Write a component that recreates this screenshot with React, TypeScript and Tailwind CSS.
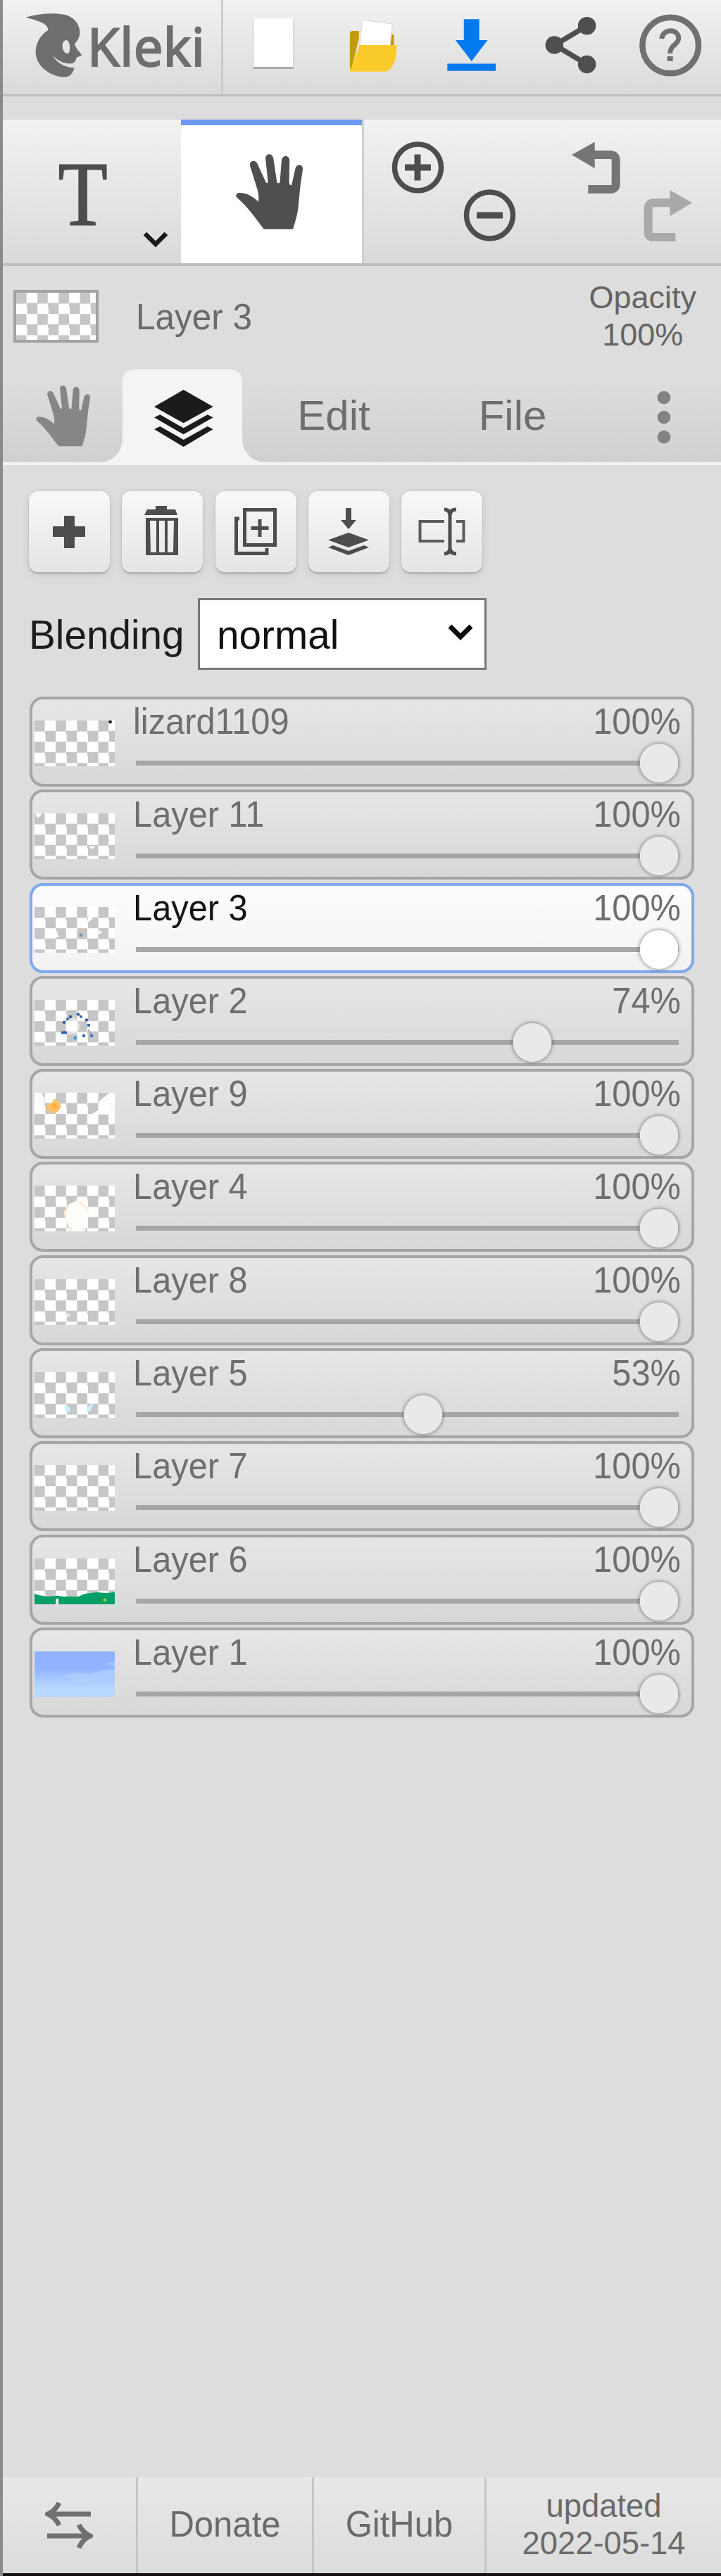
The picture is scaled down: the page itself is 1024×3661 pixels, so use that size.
import type { ReactNode } from 'react';
import clsx from 'clsx';

interface Layer {
  name: string;
  opacity: number;
  knob: number; // centre of the slider knob, in % of the track
  art?: ReactNode;
}

const layers: Layer[] = [
  {
    name: 'lizard1109',
    opacity: 100,
    knob: 96.4,
    art: <circle cx="107.5" cy="2" r="2.4" fill="#222" />,
  },
  {
    name: 'Layer 11',
    opacity: 100,
    knob: 96.4,
    art: (
      <g fill="#fff">
        <path d="M1 0h9l-2 4-4 2z" />
        <path d="M77 47h9l-4 4z" />
      </g>
    ),
  },
  {
    name: 'Layer 3',
    opacity: 100,
    knob: 96.4,
    art: (
      <>
        <path d="M76 15h8l-8 7zM30 31l5 12h-5zM91 33l6 3-6 3z" fill="#fff" />
        <circle cx="66" cy="40" r="2.4" fill="#7b97ac" />
      </>
    ),
  },
  {
    name: 'Layer 2',
    opacity: 74,
    knob: 73,
    art: (
      <>
        <path d="M45 31l12-7 8 12-4 12-13 2-4-6z" fill="#fff" opacity=".5" />
        <path d="M42 32l5-5 4-3M62 20l4 4M76 42l6 9" fill="none" stroke="#7f9cc8" strokeWidth="1.4" />
        <g fill="#2f62ad">
          <circle cx="42" cy="32" r="2.2" />
          <circle cx="47" cy="27" r="1.8" />
          <circle cx="51" cy="24" r="2.2" />
          <circle cx="62" cy="20.5" r="2.2" />
          <circle cx="66" cy="24" r="2" />
          <circle cx="74" cy="28.5" r="2.2" />
          <circle cx="77" cy="36" r="2.2" />
          <circle cx="70" cy="51" r="2.2" />
          <circle cx="81" cy="51" r="2" />
          <rect x="38" y="44.5" width="8" height="4" rx="1" />
        </g>
        <circle cx="58" cy="54" r="2.6" fill="#3f9fd4" />
      </>
    ),
  },
  {
    name: 'Layer 9',
    opacity: 100,
    knob: 96.4,
    art: (
      <>
        <path d="M0 0h10l4 8v8H0zM92 12l12-10 10-2v31H80l10-6z" fill="#fff" opacity=".93" />
        <path d="M16 18l8-3 4-7 7 6 3 6-5 7-7 3-6-5-4-1z" fill="#ffc066" />
        <circle cx="28" cy="19" r="4" fill="#ffb03d" />
      </>
    ),
  },
  {
    name: 'Layer 4',
    opacity: 100,
    knob: 96.4,
    art: (
      <>
        <path d="M60 21l-12 6-6 12 4 12 4 14h22l4-15V34l-6-9z" fill="#fffdfa" />
        <path d="M48 29l-5 9 1 6M64 22l13 15M50 65l3-5M70 60l2 4" stroke="#ffe9d2" strokeWidth="2.5" fill="none" />
      </>
    ),
  },
  {
    name: 'Layer 8',
    opacity: 100,
    knob: 96.4,
    art: <path d="M46 47l6 4-6 4z" fill="#e4e4e4" />,
  },
  {
    name: 'Layer 5',
    opacity: 53,
    knob: 52.9,
    art: (
      <g fill="#c5f1f8">
        <path d="M42 48l5-1 4 5-2 6-5-3z" />
        <path d="M75 50l6-5 3 1-4 9-6 3z" />
      </g>
    ),
  },
  { name: 'Layer 7', opacity: 100, knob: 96.4 },
  {
    name: 'Layer 6',
    opacity: 100,
    knob: 96.4,
    art: (
      <>
        <path d="M0 50l6 2 12 2 16-1 6 1h22l10-4 16-2 14 1 12-1v17H0z" fill="#079f68" />
        <path d="M30 65l1-8h3v8z" fill="#fff" />
        <circle cx="100" cy="59" r="2.4" fill="#8fcc3b" />
      </>
    ),
  },
  {
    name: 'Layer 1',
    opacity: 100,
    knob: 96.4,
    art: (
      <>
        <defs>
          <linearGradient id="sky" x1="0" y1="0" x2="0" y2="1">
            <stop offset=".35" stopColor="#90b2ff" />
            <stop offset=".6" stopColor="#a6c8ff" />
            <stop offset=".8" stopColor="#b7d8ff" />
          </linearGradient>
        </defs>
        <rect width="114" height="65" fill="url(#sky)" />
        <path d="M38 34l24-4 16 3 18-6 18-2v14l-30 3-34 3 2-6z" fill="#b0d1ff" opacity=".7" />
        <path d="M100 18l14-4v7z" fill="#b0d1ff" opacity=".6" />
      </>
    ),
  },
];

const activeLayer = 'Layer 3';

function HandIcon({ className }: { className: string }) {
  return (
    <svg viewBox="1003 655 290 325" className={className} fill="currentColor">
      <path d="M1125 977H1248C1262 935 1271 900 1273 860L1280 790 1290 722C1291 698 1263 698 1258 720L1243 788C1240 792 1234 790 1232 778L1234 685C1233 659 1202 659 1200 685L1193 775C1191 784 1182 784 1180 775L1165 675C1161 651 1130 653 1132 678L1142 772C1142 783 1136 783 1132 774L1096 696C1086 680 1062 686 1066 708L1098 810C1103 830 1104 845 1101 860C1080 838 1050 822 1022 822C1008 822 1002 834 1012 844C1060 885 1088 930 1125 977Z" />
    </svg>
  );
}

function KlekiLogo() {
  return (
    <svg viewBox="105 50 250 285" className="h-[95px] w-[83px] shrink-0" fill="#6e6e6e">
      <path
        fillRule="evenodd"
        d="M110 72C170 56 230 52 275 61C322 73 343 108 341 142C338 165 328 174 319 186C325 210 342 220 349 234C341 243 326 240 325 250C324 264 312 271 298 271C264 268 240 252 226 236C238 264 275 287 318 289C311 312 300 330 270 328C205 322 150 275 152 215C156 172 178 146 205 128C208 98 160 88 110 72ZM284 170C270 170 262 190 270 212C276 228 290 232 296 222C301 200 297 172 284 170Z"
      />
    </svg>
  );
}

function Header() {
  return (
    <header className="flex h-[137px] shrink-0 border-b-[3px] border-[#bfbfbf] bg-linear-to-b from-[#f2f2f2] to-[#dadada]">
      <div className="flex w-[313px] shrink-0 items-center gap-[6px] border-r-[3px] border-[#cbcbcb] pb-[6px] pl-[31px]">
        <KlekiLogo />
        <span className="pt-1 font-['Noto_Sans',sans-serif] text-[74px] leading-none tracking-[0.4px] text-[#6e6e6e] [-webkit-text-stroke:2px_#6e6e6e]">
          Kleki
        </span>
      </div>
      <div className="grid flex-1 grid-cols-5">
        <svg viewBox="315 0 142 134" className="h-[134px] w-full">
          <rect x="358" y="29" width="57" height="69" fill="#a8a8a8" />
          <rect x="357" y="27" width="59" height="68" fill="#d4d4d4" />
          <rect x="358.500" y="26" width="56" height="69" fill="#fff" />
        </svg>
        <svg viewBox="457 0 142 134" className="h-[134px] w-full">
          <path d="M496 46q1-2 4-2h9v10l-11 46-2-2zM554 49h5v15h-5z" fill="#c39b08" />
          <path d="M514 28l43 6-4 34h-43z" fill="#fff" stroke="#d8d8d8" strokeWidth="1" />
          <path d="M510 64H561Q563 64 563 67C562 85 558 102 544 102H496Z" fill="#fbca2b" />
        </svg>
        <svg viewBox="599 0 142 134" className="h-[134px] w-full" fill="#037bee">
          <path d="M658 27h22v30h12l-23 30-23-30h12zM634.500 90.500h69v10.500h-69z" />
        </svg>
        <svg viewBox="741 0 142 134" className="h-[134px] w-full" fill="#4f4f4f">
          <path d="M834 36.500L788 64l46 27.500" fill="none" stroke="#4f4f4f" strokeWidth="7.500" />
          <circle cx="834" cy="36.500" r="12.800" />
          <circle cx="787.500" cy="64" r="12.800" />
          <circle cx="834" cy="91.500" r="12.800" />
        </svg>
        <svg viewBox="883 0 142 134" className="h-[134px] w-full">
          <circle cx="952.500" cy="64.500" r="40" fill="none" stroke="#707070" strokeWidth="8.500" />
          <path
            d="M940 55C941 40 965 40 964 55C963 64 952 64 952 76"
            fill="none"
            stroke="#707070"
            strokeWidth="7"
          />
          <rect x="948" y="80" width="8" height="7" fill="#707070" />
        </svg>
      </div>
    </header>
  );
}

function ToolRow() {
  return (
    <div className="mt-[33px] flex h-[208px] shrink-0 border-b-4 border-[#c0c0c0] bg-linear-to-b from-[#f2f2f2] to-[#dadada]">
      <div className="relative flex w-[253px] shrink-0 justify-center pt-[40px] pr-[25px]">
        <span className="scale-x-[0.88] font-['Liberation_Serif',serif] text-[130px] leading-none text-[#4d4d4d] [-webkit-text-stroke:2px_#4d4d4d]">
          T
        </span>
        <svg viewBox="0 0 36 24" className="absolute right-[18px] bottom-[21px] h-6 w-9">
          <path d="M3 3l15 15L33 3" fill="none" stroke="#1a1a1a" strokeWidth="6.500" />
        </svg>
      </div>
      <div className="flex w-[257px] shrink-0 justify-center border-t-8 border-[#6c98f5] bg-white pt-10 pr-[6px]">
        <HandIcon className="h-[109px] w-[97px] text-[#4f4f4f]" />
      </div>
      <svg viewBox="514 170 255 204" className="h-[204px] w-[255px] shrink-0" fill="none" stroke="#4d4d4d">
        <path d="M515.500 170v204" stroke="#cfcfcf" strokeWidth="3" />
        <circle cx="593.500" cy="238" r="33" strokeWidth="7.500" />
        <circle cx="695.500" cy="306" r="33" strokeWidth="7.500" />
        <path d="M575 238h37M593 219.500v37M677 306h37" strokeWidth="9" />
      </svg>
      <svg viewBox="771 510 765 612" className="h-[204px] w-[255px] shrink-0" fill="none" strokeWidth="36">
        <path d="M990 660H1064Q1088 660 1088 684V785Q1088 807 1064 807H970" stroke="#757575" />
        <path d="M900 660L998 605V718Z" fill="#757575" />
        <path d="M1325 865H1250Q1226 865 1226 889V990Q1226 1011 1250 1011H1342" stroke="#a9a9a9" />
        <path d="M1413 865L1318 810V922Z" fill="#a9a9a9" />
      </svg>
    </div>
  );
}

function LayerStatus() {
  return (
    <div className="flex h-[147px] shrink-0 items-start pl-[15px]">
      <div className="mt-[34px] h-[75px] w-[121px] border-4 border-[#a2a2a2] bg-[repeating-conic-gradient(#fff_0_25%,#c6c6c6_0_50%)] bg-[length:30.2px_30.2px]" />
      <span className="mt-[46px] ml-[53px] origin-[50%_85%] scale-y-[1.06] text-[49.5px] leading-[54px] text-[#6a6a6a]">
        Layer 3
      </span>
      <div className="mt-[18px] mr-[35px] ml-auto text-center text-[45px] leading-[53px] text-[#646464]">
        Opacity
        <br />
        100%
      </div>
    </div>
  );
}

function Tabs() {
  return (
    <nav className="flex h-[136px] shrink-0 items-center border-b-4 border-[#f4f4f4] bg-linear-to-b from-[#ddd] from-15% to-[#d0d0d0] text-[60px] text-[#6e6e6e]">
      <div className="flex w-[170px] shrink-0 justify-center">
        <HandIcon className="h-[88px] w-[79px] text-[#868686]" />
      </div>
      <svg viewBox="522 435 510 408" className="h-[136px] w-[170px] shrink-0 translate-y-[2px] overflow-visible">
        <path
          d="M420 831C480 831 522 790 522 725V490Q522 435 577 435H977Q1032 435 1032 490V725C1032 790 1075 831 1135 831V843H420Z"
          fill="#f4f4f4"
        />
        <path
          d="M782 522L908 594 782 664 657 594ZM657 640L682 628 782 685 884 628 908 640 782 712ZM657 690L682 678 782 735 884 678 908 690 782 765Z"
          fill="#1b1b1b"
        />
      </svg>
      <span className="w-[260px] text-center leading-[132px]">Edit</span>
      <span className="w-[248px] text-center leading-[132px]">File</span>
      <svg viewBox="0 0 20 76" className="mx-auto h-[76px] w-5 translate-x-[5px] translate-y-[2px]" fill="#828282">
        <circle cx="10" cy="10" r="9.300" />
        <circle cx="10" cy="38" r="9.300" />
        <circle cx="10" cy="66" r="9.300" />
      </svg>
    </nav>
  );
}

function IconButton({ children }: { children: ReactNode }) {
  return (
    <button className="size-[115px] rounded-[13px] bg-linear-to-b from-[#f8f8f8] to-[#e5e5e5] shadow-[0_3px_2px_#b4b4b4,0_4px_14px_rgba(0,0,0,0.08),0_0_2px_rgba(0,0,0,0.2)]">
      <svg viewBox="0 0 115 115" className="size-[115px]" fill="#4d4d4d">
        {children}
      </svg>
    </button>
  );
}

function LayerActions() {
  return (
    <div className="flex gap-[17.3px] px-[41px] pt-[37px]">
      <IconButton>
        <path d="M50 35h15v15h15v15H65v16H50V65H34V50h16z" />
      </IconButton>
      <IconButton>
        <path d="M48 21h16v5h12l3 8H32l4-8h12z" />
        <path
          fillRule="evenodd"
          d="M34 38h46v53H34zM40 42l1 45h8V42zM53 42v45h8V42zM65 42v45h8l1-45z"
        />
      </IconButton>
      <IconButton>
        <g fill="none" stroke="#4d4d4d" strokeWidth="5">
          <path d="M41.500 26.500h43v50h-43zM63 40v25M50.500 52.500h25" />
          <path d="M34 39h-4.500v49.500H73V81" />
        </g>
      </IconButton>
      <IconButton>
        <path d="M53 24h8v17h7L57 54 46 41h7z" />
        <path d="M57 59L86 69.500 57 80 28 69.500z" />
        <path d="M28 80l7-3 22 8 22-8 7 3-29 11z" />
      </IconButton>
      <IconButton>
        <path d="M61 43H26.500v28H61M78 43h10.500v28H78" fill="none" stroke="#5c5c5c" strokeWidth="4" />
        <path
          d="M61 26q8 0 8 9v45q0 9-8 9M78 26q-9 0-9 9v45q0 9 9 9"
          fill="none"
          stroke="#4d4d4d"
          strokeWidth="5"
        />
      </IconButton>
    </div>
  );
}

function Blending() {
  return (
    <div className="flex items-center px-[41px] pt-[37px] text-[56.7px] text-[#1c1c1c]">
      <span className="w-[240px] pt-[3px] leading-[99px]">Blending</span>
      <div className="flex h-[102px] w-[410px] items-center justify-between border-[3px] border-[#767676] bg-white pr-[15px] pl-[24px] text-[#111]">
        <span className="pt-[3px] leading-[93px]">normal</span>
        <svg viewBox="0 0 38 26" className="mb-1 h-[26px] w-[38px]">
          <path d="M4 4l15 15L34 4" fill="none" stroke="#0a0a0a" strokeWidth="7" />
        </svg>
      </div>
    </div>
  );
}

function LayerRow({ layer }: { layer: Layer }) {
  const active = layer.name === activeLayer;
  return (
    <li
      className={clsx(
        'flex h-[128px] rounded-[19px] border-4 bg-linear-to-b',
        active ? 'border-[#80a8ee] from-[#fdfdfd] to-[#f2f2f2]' : 'border-[#a6a6a6] from-[#e6e6e6] to-[#d8d8d8]',
      )}
    >
      <div className="mt-[30px] ml-[3px] h-[65px] w-[114px] shrink-0 overflow-hidden bg-[repeating-conic-gradient(#fff_0_25%,#c6c6c6_0_50%)] bg-[length:30.2px_30.2px]">
        <svg viewBox="0 0 114 65" className="h-[65px] w-[114px]">
          {layer.art}
        </svg>
      </div>
      <div className="mr-[18px] ml-[30px] flex-1">
        <div className="-mr-[3px] -ml-[4px] flex origin-[50%_80%] scale-y-[1.06] justify-between pt-[5px] text-[48.8px] leading-[54px] text-[#6f6f6f]">
          <span className={clsx(active && 'text-[#151515]')}>{layer.name}</span>
          <span>{layer.opacity}%</span>
        </div>
        <div className="relative mt-[28px] h-[7px] bg-[#a6a6a6]">
          <div
            className={clsx(
              'absolute -top-[24px] size-[55px] -translate-x-1/2 rounded-full shadow-[0_0_5px_1px_rgba(0,0,0,0.38)]',
              active ? 'bg-white' : 'bg-[#e9e9e9]',
            )}
            style={{ left: `${layer.knob}%` }}
          />
        </div>
      </div>
    </li>
  );
}

function Footer() {
  return (
    <footer className="flex h-[140px] shrink-0 items-stretch border-b-4 border-[#151012] bg-linear-to-b from-[#e8e8e8] to-[#dcdcdc] text-[#6a6a6a]">
      <div className="flex w-[192px] items-center justify-center border-r-[3px] border-[#c6c6c6] pr-[2px]">
        <svg viewBox="0 0 68 70" className="h-[70px] w-[68px]" fill="none" stroke="#707070" strokeWidth="7">
          <path d="M65 19H6M20 3Q15 14 4 19Q15 24 20 35" />
          <path d="M3 50h59M48 34Q53 45 64 50Q53 55 48 67" />
        </svg>
      </div>
      <div className="flex w-[250px] items-center justify-center border-r-[3px] border-[#c6c6c6] pb-[2px] text-[49px]">
        <span className="scale-y-[1.06]">Donate</span>
      </div>
      <div className="flex w-[245px] items-center justify-center border-r-[3px] border-[#c6c6c6] pb-[2px] text-[49px]">
        <span className="scale-y-[1.06]">GitHub</span>
      </div>
      <div className="flex-1 pt-[14px] text-center text-[45.4px] leading-[53px]">
        updated
        <br />
        2022-05-14
      </div>
    </footer>
  );
}

export default function App() {
  return (
    <div className="flex h-[3661px] w-[1024px] flex-col border-l-4 border-[#8a8a8a] bg-[#ddd] font-['Liberation_Sans',Arial,sans-serif]">
      <Header />
      <ToolRow />
      <LayerStatus />
      <Tabs />
      <main className="-ml-1 flex-1">
        <LayerActions />
        <Blending />
        <ul className="mt-[38px] mr-[38px] ml-[42px] flex flex-col gap-[4.3px]">
          {layers.map((layer) => (
            <LayerRow key={layer.name} layer={layer} />
          ))}
        </ul>
      </main>
      <Footer />
    </div>
  );
}
